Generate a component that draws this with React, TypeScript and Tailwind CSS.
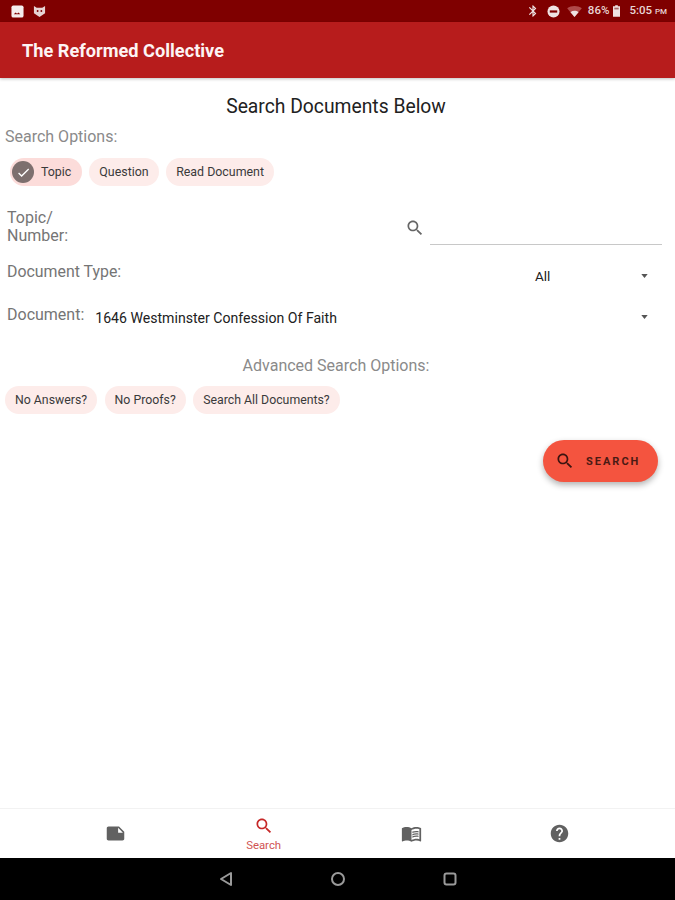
import React from 'react';

const searchPath =
  'M15.5 14h-.79l-.28-.27C15.41 12.59 16 11.11 16 9.5 16 5.91 13.09 3 9.5 3S3 5.91 3 9.5 5.91 16 9.5 16c1.61 0 3.09-.59 4.23-1.57l.27.28v.79l5 4.99L20.49 19l-4.99-5zm-6 0C7.01 14 5 11.99 5 9.5S7.01 5 9.5 5 14 7.01 14 9.5 11.99 14 9.5 14z';

function SearchIcon({ className }: { className: string }) {
  return (
    <svg viewBox="0 0 24 24" className={className} fill="currentColor">
      <path d={searchPath} />
    </svg>
  );
}

function Caret({ className }: { className?: string }) {
  return (
    <svg viewBox="0 0 8 5" className={`h-[4px] w-[7px] text-[#555555] ${className ?? ''}`} fill="currentColor">
      <path d="M0 0h8L4 5z" />
    </svg>
  );
}

function Chip({ label, selected }: { label: string; selected?: boolean }) {
  return (
    <div
      className={`flex h-7 items-center rounded-full text-[12.4px] text-[#3a3a3a] ${
        selected ? 'bg-[#fcdcda] pl-[2px] pr-[11px]' : 'bg-[#fdecea] px-[10.5px]'
      }`}
    >
      {selected && (
        <span className="mr-[7px] flex h-[22px] w-[22px] items-center justify-center rounded-full bg-[#7d6f6e]">
          <svg viewBox="0 0 24 24" className="h-[15px] w-[15px]" fill="#ffffff">
            <path d="M9 16.17 4.83 12l-1.42 1.41L9 19 21 7l-1.41-1.41z" />
          </svg>
        </span>
      )}
      {label}
    </div>
  );
}

function AdvancedChip({ label }: { label: string }) {
  return (
    <div className="flex h-7 items-center rounded-full bg-[#fdecea] px-[10px] text-[12.3px] text-[#3a3a3a]">{label}</div>
  );
}

function StatusBar() {
  return (
    <div className="flex h-[22px] shrink-0 items-center bg-[#7f0000] pl-[11px] pr-[8px] text-[#e8d5d5]">
      <svg viewBox="0 0 14 14" className="h-[13px] w-[13px]">
        <rect x="0.5" y="0.5" width="13" height="13" rx="2" fill="#f5eeee" />
        <path d="M3 10l2-2 1.5 1.5L8 8l2 2z" fill="#7f0000" />
      </svg>
      <svg viewBox="0 0 14 14" className="ml-[9px] h-[13px] w-[13px]">
        <path d="M1 1l3 2h6l3-2v8l-6 4-6-4z" fill="#e6d3d3" />
        <circle cx="5" cy="6.5" r="1" fill="#7f0000" />
        <circle cx="9" cy="6.5" r="1" fill="#7f0000" />
      </svg>
      <div className="ml-auto flex items-center">
        <svg viewBox="0 0 24 24" className="h-[14px] w-[14px]" fill="#efe3e3">
          <path d="M17.71 7.71 12 2h-1v7.59L6.41 5 5 6.41 10.59 12 5 17.59 6.41 19 11 14.41V22h1l5.71-5.71-4.3-4.29 4.3-4.29zM13 5.83l1.88 1.88L13 9.59V5.83zm1.88 10.46L13 18.17v-3.76l1.88 1.88z" />
        </svg>
        <svg viewBox="0 0 14 14" className="ml-[7px] h-[13px] w-[13px]">
          <circle cx="7" cy="7" r="6.5" fill="#efe3e3" />
          <rect x="3" y="5.8" width="8" height="2.4" fill="#7f0000" />
        </svg>
        <svg viewBox="0 0 16 12" className="ml-[7px] h-[11px] w-[15px]">
          <path d="M0 2.5C4.5-.8 11.500-.8 16 2.500L8 12z" fill="#b04a4a" />
          <path d="M3.600 6.800c2.600-2 6.200-2 8.800 0L8 12z" fill="#efe3e3" />
        </svg>
        <span className="ml-[6px] text-[11.5px] font-medium">86%</span>
        <svg viewBox="0 0 8 13" className="ml-[4px] h-[12px] w-[7px]">
          <path d="M2.500 0h3v1.200H8V13H0V1.200h2.500z" fill="#efe3e3" />
          <rect x="1.500" y="2.700" width="5" height="2" fill="#a86a6a" />
        </svg>
        <span className="ml-[9px] text-[11.5px] font-medium">
          5:05 <span className="text-[8px]">PM</span>
        </span>
      </div>
    </div>
  );
}

function NavIcon({ children }: { children: React.ReactNode }) {
  return (
    <div className="flex items-center justify-center">
      <svg viewBox="0 0 24 24" className="h-[21px] w-[21px]" fill="#616161">
        {children}
      </svg>
    </div>
  );
}

export default function App() {
  return (
    <div className="flex h-[900px] w-[675px] flex-col overflow-hidden bg-white font-['Roboto',sans-serif]">
      <StatusBar />
      <header className="flex h-[56px] shrink-0 items-center bg-[#b71c1c] pl-[22px] pt-[1px] shadow-[0_1px_3px_rgba(0,0,0,0.25)]">
        <h1 className="text-[18.2px] font-bold text-[#fdf4f4]">The Reformed Collective</h1>
      </header>

      <main className="flex-1">
        <h2 className="mt-[17px] pr-[3px] text-center text-[19.3px] leading-[24px] text-[#212121]">Search Documents Below</h2>

        <p className="ml-[5px] mt-[9px] text-[16px] leading-[18px] text-[#8a8a8a]">Search Options:</p>
        <div className="ml-[10px] mt-[12px] flex gap-[6.5px]">
          <Chip label="Topic" selected />
          <Chip label="Question" />
          <Chip label="Read Document" />
        </div>

        <div className="ml-[7px] mr-[13px] mt-[23px] flex items-start">
          <span className="w-[70px] text-[16px] leading-[18px] text-[#757575]">
            Topic/
            <br />
            Number:
          </span>
          <SearchIcon className="ml-auto mt-[9px] h-[20px] w-[20px] text-[#666666]" />
          <div className="ml-[5px] h-[36px] w-[232px] border-b border-[#c8c8c8]" />
        </div>

        <div className="ml-[7px] mt-[18px] flex items-start">
          <span className="text-[15.9px] leading-[18px] text-[#757575]">Document Type:</span>
          <span className="ml-auto mt-[4px] w-[106px] text-[13.500px] leading-[18px] text-[#212121]">All</span>
          <Caret className="mr-[27px] mt-[11px]" />
        </div>

        <div className="ml-[7px] mr-[13px] mt-[21px] flex items-start">
          <span className="text-[16px] leading-[18px] text-[#757575]">Document:</span>
          <span className="ml-[11px] mt-[3px] text-[14.1px] leading-[18px] text-[#212121]">
            1646 Westminster Confession Of Faith
          </span>
          <Caret className="ml-auto mr-[14px] mt-[9px]" />
        </div>

        <p className="mt-[30px] pr-[3px] text-center text-[16px] leading-[18px] text-[#8a8a8a]">Advanced Search Options:</p>
        <div className="ml-[5px] mt-[11px] flex gap-[7.5px]">
          <AdvancedChip label="No Answers?" />
          <AdvancedChip label="No Proofs?" />
          <AdvancedChip label="Search All Documents?" />
        </div>

        <div className="mr-[17px] mt-[26px] flex justify-end">
          <button className="flex h-[42px] w-[115px] items-center rounded-full bg-[#f4543f] pl-[12px] shadow-[0_3px_6px_rgba(0,0,0,0.3)]">
            <SearchIcon className="h-[20px] w-[20px] text-[#3a1410]" />
            <span className="ml-[11px] pt-[2px] text-[11px] font-bold tracking-[2px] text-[#4a1a14]">SEARCH</span>
          </button>
        </div>
      </main>

      <nav className="grid h-[50px] shrink-0 grid-cols-4 border-t border-[#f2f2f2] bg-white px-[42px]">
        <NavIcon>
          <path d="M22 10l-6-6H4c-1.100 0-2 .9-2 2v12.010c0 1.100.9 1.990 2 1.990l16-.01c1.100 0 2-.89 2-1.990v-8zm-7-4.500l5.500 5.500H15V5.500z" />
        </NavIcon>
        <div className="flex flex-col items-center pt-[7px] text-[#c62828]">
          <SearchIcon className="h-[20px] w-[20px]" />
          <span className="mt-[3px] text-[11.4px] leading-[12px] opacity-80">Search</span>
        </div>
        <NavIcon>
          <path d="M21 5c-1.110-.35-2.330-.5-3.500-.5-1.950 0-4.050.4-5.500 1.500-1.450-1.100-3.550-1.500-5.500-1.500S2.450 4.900 1 6v14.650c0 .25.25.5.5.5.1 0 .15-.05.25-.05C3.100 20.450 5.050 20 6.500 20c1.950 0 4.050.4 5.500 1.500 1.350-.85 3.800-1.500 5.500-1.500 1.650 0 3.350.3 4.750 1.050.1.05.15.05.25.05.25 0 .5-.25.5-.5V6c-.6-.45-1.250-.75-2-1zm0 13.500c-1.100-.35-2.300-.5-3.500-.5-1.700 0-4.150.65-5.500 1.500V8c1.350-.85 3.800-1.500 5.500-1.500 1.200 0 2.400.15 3.500.5v11.500z" />
          <path d="M17.500 10.500c.88 0 1.730.09 2.500.26V9.240c-.79-.15-1.640-.24-2.500-.24-1.700 0-3.240.29-4.500.83v1.660c1.130-.64 2.700-.99 4.500-.99zM13 12.490v1.660c1.130-.64 2.700-.99 4.500-.99.88 0 1.730.09 2.500.26V11.900c-.79-.15-1.640-.24-2.500-.24-1.700 0-3.240.3-4.500.83zM17.500 14.330c-1.700 0-3.240.29-4.500.83v1.660c1.130-.64 2.700-.99 4.500-.99.88 0 1.730.09 2.500.26v-1.520c-.79-.16-1.640-.24-2.500-.24z" />
        </NavIcon>
        <NavIcon>
          <path d="M12 2C6.480 2 2 6.480 2 12s4.480 10 10 10 10-4.480 10-10S17.520 2 12 2zm1 17h-2v-2h2v2zm2.070-7.750l-.9.92C13.450 12.900 13 13.500 13 15h-2v-.5c0-1.100.45-2.100 1.170-2.830l1.240-1.260c.37-.36.59-.86.59-1.410 0-1.100-.9-2-2-2s-2 .9-2 2H8c0-2.210 1.790-4 4-4s4 1.790 4 4c0 .88-.36 1.680-.93 2.250z" />
        </NavIcon>
      </nav>

      <div className="flex h-[42px] shrink-0 items-center bg-black pl-[218px]">
        <svg viewBox="0 0 16 16" className="h-[16px] w-[16px]" fill="none" stroke="#9a9a9a" strokeWidth="2" strokeLinejoin="round">
          <path d="M13 2v12L3 8z" />
        </svg>
        <svg viewBox="0 0 16 16" className="ml-[96px] h-[16px] w-[16px]" fill="none" stroke="#9a9a9a" strokeWidth="2">
          <circle cx="8" cy="8" r="6" />
        </svg>
        <svg viewBox="0 0 16 16" className="ml-[96px] h-[16px] w-[16px]" fill="none" stroke="#9a9a9a" strokeWidth="2">
          <rect x="2.500" y="2.500" width="11" height="11" rx="2" />
        </svg>
      </div>
    </div>
  );
}
